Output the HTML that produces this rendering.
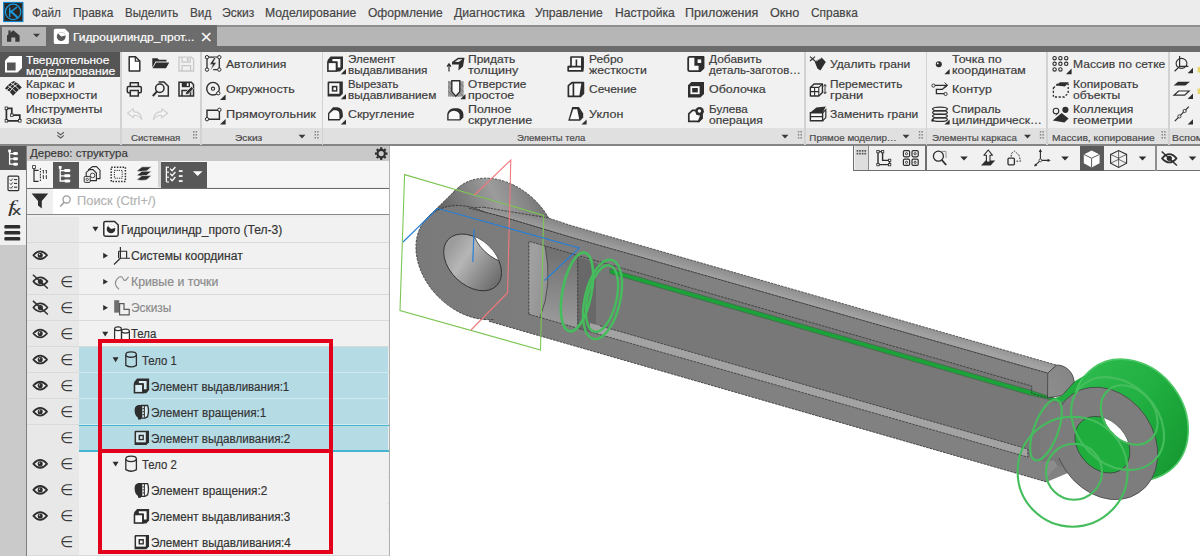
<!DOCTYPE html>
<html lang="ru"><head><meta charset="utf-8"><title>Гидроцилиндр_прото</title>
<style>
html,body{margin:0;padding:0}
body{width:1200px;height:556px;position:relative;overflow:hidden;background:#fff;font-family:"Liberation Sans",sans-serif}
.b{position:absolute}
.t{position:absolute;white-space:nowrap;line-height:1;transform-origin:0 0;display:block;-webkit-text-stroke:0.18px currentColor}
svg{position:absolute;left:0;top:0}
</style></head><body>
<div class="b" style="left:0px;top:0px;width:1200px;height:25px;background:#ececec;"></div>
<div class="b" style="left:0px;top:25px;width:1200px;height:27px;background:#b6b6b6;"></div>
<div class="b" style="left:217px;top:25px;width:983px;height:1.6px;background:#8f8f8f;"></div>
<div class="b" style="left:0px;top:46px;width:1200px;height:6px;background:#6c6c6c;"></div>
<div class="b" style="left:0px;top:25px;width:217px;height:27px;background:#6c6c6c;"></div>
<div class="b" style="left:2px;top:27px;width:44px;height:19px;background:#b4b4b4;"></div>
<div class="b" style="left:0px;top:52px;width:1200px;height:76px;background:#f1f1f1;"></div>
<div class="b" style="left:0px;top:127.8px;width:1200px;height:16.7px;background:#e0e0e0;"></div>
<div class="b" style="left:0px;top:144.4px;width:1200px;height:1.3px;background:#858585;"></div>
<div class="b" style="left:0px;top:52px;width:120px;height:24.5px;background:#555555;"></div>
<div class="b" style="left:120px;top:52px;width:1.5px;height:92.5px;background:#d2d2d2;"></div>
<div class="b" style="left:200px;top:52px;width:1.5px;height:92.5px;background:#d2d2d2;"></div>
<div class="b" style="left:321.5px;top:52px;width:1.5px;height:92.5px;background:#d2d2d2;"></div>
<div class="b" style="left:804px;top:52px;width:1.5px;height:92.5px;background:#d2d2d2;"></div>
<div class="b" style="left:925.5px;top:52px;width:1.5px;height:92.5px;background:#d2d2d2;"></div>
<div class="b" style="left:1046px;top:52px;width:1.5px;height:92.5px;background:#d2d2d2;"></div>
<div class="b" style="left:1168px;top:52px;width:1.5px;height:92.5px;background:#d2d2d2;"></div>
<div class="b" style="left:0px;top:145.5px;width:27px;height:411px;background:#cacaca;"></div>
<div class="b" style="left:0px;top:145.5px;width:25.5px;height:24.5px;background:#555555;"></div>
<div class="b" style="left:0px;top:170px;width:25.5px;height:75px;background:#f0f0f0;"></div>
<div class="b" style="left:27px;top:145.5px;width:363px;height:411px;background:#eeeeee;"></div>
<div class="b" style="left:25.5px;top:145.5px;width:1.6px;height:411px;background:#808080;"></div>
<div class="b" style="left:388.5px;top:145.5px;width:1.5px;height:411px;background:#b0b0b0;"></div>
<div class="b" style="left:27px;top:145.5px;width:361.5px;height:15.8px;background:#c9c9c9;"></div>
<div class="b" style="left:27px;top:161.3px;width:361.5px;height:26.2px;background:#f5f5f5;"></div>
<div class="b" style="left:158.2px;top:161.3px;width:3px;height:26.2px;background:#d4d4d4;"></div>
<div class="b" style="left:53.2px;top:162.3px;width:25.4px;height:25.4px;background:#585858;"></div>
<div class="b" style="left:161.2px;top:162.3px;width:46px;height:25.4px;background:#585858;"></div>
<div class="b" style="left:27px;top:187.5px;width:361.5px;height:1.5px;background:#6a6a6a;"></div>
<div class="b" style="left:27px;top:189px;width:361.5px;height:25px;background:#ffffff;"></div>
<div class="b" style="left:27px;top:189px;width:26px;height:24.7px;background:#efefef;"></div>
<div class="b" style="left:27px;top:213.7px;width:361.5px;height:1.5px;background:#8a8a8a;"></div>
<div class="b" style="left:27px;top:216.6px;width:52.2px;height:26.1px;background:#e8e8e8;"></div>
<div class="b" style="left:79.2px;top:216.6px;width:309.3px;height:26.1px;background:#f1f1f1;"></div>
<div class="b" style="left:27px;top:242.0px;width:361.5px;height:1px;background:#dadada;"></div>
<div class="b" style="left:27px;top:242.67px;width:52.2px;height:26.1px;background:#e8e8e8;"></div>
<div class="b" style="left:79.2px;top:242.67px;width:309.3px;height:26.1px;background:#f1f1f1;"></div>
<div class="b" style="left:27px;top:268.07px;width:361.5px;height:1px;background:#dadada;"></div>
<div class="b" style="left:27px;top:268.74px;width:52.2px;height:26.1px;background:#e8e8e8;"></div>
<div class="b" style="left:79.2px;top:268.74px;width:309.3px;height:26.1px;background:#f1f1f1;"></div>
<div class="b" style="left:27px;top:294.14px;width:361.5px;height:1px;background:#dadada;"></div>
<div class="b" style="left:27px;top:294.81px;width:52.2px;height:26.1px;background:#e8e8e8;"></div>
<div class="b" style="left:79.2px;top:294.81px;width:309.3px;height:26.1px;background:#f1f1f1;"></div>
<div class="b" style="left:27px;top:320.21px;width:361.5px;height:1px;background:#dadada;"></div>
<div class="b" style="left:27px;top:320.88px;width:52.2px;height:26.1px;background:#e8e8e8;"></div>
<div class="b" style="left:79.2px;top:320.88px;width:309.3px;height:26.1px;background:#f1f1f1;"></div>
<div class="b" style="left:27px;top:346.28px;width:361.5px;height:1px;background:#dadada;"></div>
<div class="b" style="left:27px;top:346.95px;width:52.2px;height:26.1px;background:#e8e8e8;"></div>
<div class="b" style="left:79.2px;top:346.95px;width:309.3px;height:26.1px;background:#b5dbe5;"></div>
<div class="b" style="left:27px;top:372.34999999999997px;width:361.5px;height:1px;background:#dadada;"></div>
<div class="b" style="left:79.2px;top:372.34999999999997px;width:309.3px;height:1px;background:#d2e9ef;"></div>
<div class="b" style="left:27px;top:373.02px;width:52.2px;height:26.1px;background:#e8e8e8;"></div>
<div class="b" style="left:79.2px;top:373.02px;width:309.3px;height:26.1px;background:#b5dbe5;"></div>
<div class="b" style="left:27px;top:398.41999999999996px;width:361.5px;height:1px;background:#dadada;"></div>
<div class="b" style="left:79.2px;top:398.41999999999996px;width:309.3px;height:1px;background:#d2e9ef;"></div>
<div class="b" style="left:27px;top:399.09000000000003px;width:52.2px;height:26.1px;background:#e8e8e8;"></div>
<div class="b" style="left:79.2px;top:399.09000000000003px;width:309.3px;height:26.1px;background:#b5dbe5;"></div>
<div class="b" style="left:27px;top:424.49px;width:361.5px;height:1px;background:#dadada;"></div>
<div class="b" style="left:79.2px;top:424.49px;width:309.3px;height:1px;background:#d2e9ef;"></div>
<div class="b" style="left:27px;top:425.15999999999997px;width:52.2px;height:26.1px;background:#e8e8e8;"></div>
<div class="b" style="left:79.2px;top:425.15999999999997px;width:309.3px;height:26.1px;background:#b5dbe5;"></div>
<div class="b" style="left:27px;top:450.55999999999995px;width:361.5px;height:1px;background:#dadada;"></div>
<div class="b" style="left:79.2px;top:450.55999999999995px;width:309.3px;height:1px;background:#d2e9ef;"></div>
<div class="b" style="left:27px;top:451.23px;width:52.2px;height:26.1px;background:#e8e8e8;"></div>
<div class="b" style="left:79.2px;top:451.23px;width:309.3px;height:26.1px;background:#f1f1f1;"></div>
<div class="b" style="left:27px;top:476.63px;width:361.5px;height:1px;background:#dadada;"></div>
<div class="b" style="left:27px;top:477.29999999999995px;width:52.2px;height:26.1px;background:#e8e8e8;"></div>
<div class="b" style="left:79.2px;top:477.29999999999995px;width:309.3px;height:26.1px;background:#f1f1f1;"></div>
<div class="b" style="left:27px;top:502.69999999999993px;width:361.5px;height:1px;background:#dadada;"></div>
<div class="b" style="left:27px;top:503.37px;width:52.2px;height:26.1px;background:#e8e8e8;"></div>
<div class="b" style="left:79.2px;top:503.37px;width:309.3px;height:26.1px;background:#f1f1f1;"></div>
<div class="b" style="left:27px;top:528.77px;width:361.5px;height:1px;background:#dadada;"></div>
<div class="b" style="left:27px;top:529.44px;width:52.2px;height:26.1px;background:#e8e8e8;"></div>
<div class="b" style="left:79.2px;top:529.44px;width:309.3px;height:26.1px;background:#f1f1f1;"></div>
<div class="b" style="left:27px;top:554.84px;width:361.5px;height:1px;background:#dadada;"></div>
<div class="b" style="left:27px;top:555.51px;width:52.2px;height:26.1px;background:#e8e8e8;"></div>
<div class="b" style="left:79.2px;top:555.51px;width:309.3px;height:26.1px;background:#f1f1f1;"></div>
<div class="b" style="left:27px;top:580.91px;width:361.5px;height:1px;background:#dadada;"></div>
<div class="b" style="left:79px;top:424.6px;width:309.5px;height:1.3px;background:#45b5d0;"></div>
<div class="b" style="left:79px;top:450.2px;width:309.5px;height:1.4px;background:#45b5d0;"></div>
<svg width="1200" height="556" viewBox="0 0 1200 556">
<defs>
<linearGradient id="gl" gradientUnits="userSpaceOnUse" x1="425" y1="250" x2="545" y2="195"><stop offset="0.15" stop-color="#5a5a5a"/><stop offset="0.45" stop-color="#808080"/><stop offset="0.65" stop-color="#9c9c9c"/><stop offset="0.85" stop-color="#858585"/><stop offset="1" stop-color="#6e6e6e"/></linearGradient>
<linearGradient id="gt" gradientUnits="userSpaceOnUse" x1="700" y1="262" x2="697" y2="273"><stop offset="0" stop-color="#8a8a8a"/><stop offset="1" stop-color="#a2a2a2"/></linearGradient>
<linearGradient id="gh" gradientUnits="userSpaceOnUse" x1="448" y1="250" x2="498" y2="285"><stop offset="0" stop-color="#9c9c9c"/><stop offset="0.3" stop-color="#b6b6b6"/><stop offset="0.65" stop-color="#8e8e8e"/><stop offset="1" stop-color="#6a6a6a"/></linearGradient>
<linearGradient id="gc" gradientUnits="userSpaceOnUse" x1="529" y1="280" x2="560" y2="285"><stop offset="0" stop-color="#a0a0a0"/><stop offset="1" stop-color="#8a8a8a"/></linearGradient>
<linearGradient id="gb" gradientUnits="userSpaceOnUse" x1="560" y1="255" x2="550" y2="322"><stop offset="0" stop-color="#727272"/><stop offset="1" stop-color="#9a9a9a"/></linearGradient>
<linearGradient id="gg" gradientUnits="userSpaceOnUse" x1="1085" y1="370" x2="1188" y2="440"><stop offset="0" stop-color="#2cba4c"/><stop offset="0.5" stop-color="#21b041"/><stop offset="1" stop-color="#179c33"/></linearGradient>
<linearGradient id="ge" gradientUnits="userSpaceOnUse" x1="1048" y1="385" x2="1072" y2="372"><stop offset="0" stop-color="#8c8c8c"/><stop offset="1" stop-color="#858585"/></linearGradient>
<linearGradient id="gf" gradientUnits="userSpaceOnUse" x1="420" y1="0" x2="720" y2="0"><stop offset="0" stop-color="#7a7a7a"/><stop offset="1" stop-color="#818181"/></linearGradient>
<clipPath id="chole"><path d="M496.90 285.46A33.5 22.8 43.5 1 0 448.30 239.34A33.5 22.8 43.5 1 0 496.90 285.46z" />
</clipPath>
<clipPath id="chole2"><path d="M1123.34 467.96A31.3 23.5 48 1 0 1081.46 421.44A31.3 23.5 48 1 0 1123.34 467.96z" />
</clipPath>
</defs>
<path d="M546.25 280.45A64 48 45 1 0 455.75 189.95A64 48 45 1 0 546.25 280.45z" fill="url(#gl)" stroke="#2a2a2a" stroke-width="0.8" stroke-dasharray="2.5 1.2"/>
<polygon points="428.0,217.1 456.0,189.7 546.0,280.7 518.0,308.1" fill="url(#gl)"/>
<path d="M428.0 217.1L456.0 189.7" stroke="#2a2a2a" stroke-width="0.8" stroke-dasharray="2.5 1" fill="none"/>
<polygon points="483.7,207.2 548.4,218.0 570.0,225.2 1056.6,365.1 1047.7,373.2 570.0,237.0 503.5,217.1 469.0,208.0" fill="url(#gt)" stroke="#2a2a2a" stroke-width="0.7" stroke-dasharray="2.5 1"/>
<path d="M503.5 217.1L570 237.0L1047.7 373.2L1047.7 397.9L1075 402L1075 470L1046.5 481.9L489 321.3z" fill="url(#gf)"/>
<path d="M518.25 307.85A64 48 45 1 0 427.75 217.35A64 48 45 1 0 518.25 307.85z" fill="url(#gf)" stroke="#2a2a2a" stroke-width="0.8" stroke-dasharray="2.5 1.2"/>
<path d="M469 208.2L503.5 217.1L570 237.0L570 341L489 318z" fill="url(#gf)"/>
<path d="M489 321.3L1046.5 481.9" stroke="#2a2a2a" stroke-width="0.8" stroke-dasharray="2.5 1" fill="none"/>
<path d="M469 208L503.5 217.1L570 237.0L1047.7 373.2" stroke="#2a2a2a" stroke-width="0.8" stroke-dasharray="2.5 1" fill="none"/>
<path d="M496.90 285.46A33.5 22.8 43.5 1 0 448.30 239.34A33.5 22.8 43.5 1 0 496.90 285.46z" fill="url(#gh)" stroke="#2a2a2a" stroke-width="0.9"/>
<g clip-path="url(#chole)"><path d="M524.90 258.06A33.5 22.8 43.5 1 0 476.30 211.94A33.5 22.8 43.5 1 0 524.90 258.06z" fill="#ffffff" stroke="#2a2a2a" stroke-width="0.8"/>
</g>
<polygon points="528.8,241.3 1031.7,386.0 1031.7,393.4 1047.7,397.9 1075.0,402.0 1075.0,470.6 528.8,314.2" fill="#787878"/>
<path d="M528.8 241.3L545 246.0Q553 285 540 317.4L528.8 314.2z" fill="url(#gc)"/>
<path d="M545 246.0L577.7 255.4L577.7 328.2L540 317.4Q553 285 545 246.0z" fill="url(#gb)"/>
<path d="M545 246.0Q553 285 540 317.4" fill="none" stroke="#2a2a2a" stroke-width="0.6"/>
<polygon points="577.7,256.4 600.0,264.8 600.0,332.6 577.7,328.2" fill="#686868"/>
<polygon points="596.0,270.0 1075.0,408.7 1075.0,462.6 596.0,324.6" fill="#787878"/>
<polygon points="610.0,268.8 1030.0,390.2 1056.0,398.7 1056.0,400.8 1030.0,395.1 610.0,273.4" fill="#1aa338" stroke="#4a6b4e" stroke-width="0.9"/>
<polygon points="590.0,322.9 1027.8,449.0 1027.8,457.1 590.0,331.7" fill="#a3a3a3"/>
<g stroke="#2a2a2a" stroke-width="0.7" stroke-dasharray="2.5 1" fill="none"><path d="M528.8 314.2L528.8 241.3L1031.7 386.0L1031.7 393.4L1047.7 397.9"/><path d="M528.8 314.2L1027.8 457.1L1027.8 449.0"/><path d="M600 325.8L1027.8 449.0"/><path d="M577.7 255.4L577.7 328.2"/></g>
<polygon points="1049,400.3 1062,395.5 1074.4,381.5 1084.4,375.4 1082,392 1062,402" fill="#22ad40"/>
<path d="M1047.7 373.2L1056.6 365.1C1064 364.5 1073.5 371 1074.2 382L1061.8 395.6L1053 397L1047.5 397.9z" fill="url(#ge)" stroke="#2a2a2a" stroke-width="0.7"/>
<polygon points="1045.2,461.7 1053.8,460.3 1057.2,465.7 1050.3,473.2 1045.5,480.5" fill="#8c8c8c"/>
<path d="M1168.96 471.08A64 53.5 53.4 1 0 1092.64 368.32A64 53.5 53.4 1 0 1168.96 471.08z" fill="url(#gg)" stroke="#4fc868" stroke-width="1.6"/>
<polygon points="1076.5,391.2 1084.4,375.4 1150,400 1184.5,446 1156.9,474.3" fill="url(#gg)"/>
<polygon points="1040.0,398.6 1085.0,411.6 1085.0,470.0 1058.7,459.0 1046.5,456.5 1040.0,452.5" fill="#7b7b7b"/>
<path d="M1138.92 492.64A59.4 47.9 56 1 0 1072.48 394.16A59.4 47.9 56 1 0 1138.92 492.64z" fill="#7d7d7d" stroke="#3a3a3a" stroke-width="0.7"/>
<polygon points="1049.0,402.2 1075.0,408.7 1075.0,462.0 1058.7,458.0 1049.0,455.5" fill="#7c7c7c"/>
<path d="M1123.34 467.96A31.3 23.5 48 1 0 1081.46 421.44A31.3 23.5 48 1 0 1123.34 467.96z" fill="#1fae3e" stroke="#2a2a2a" stroke-width="0.6"/>
<g clip-path="url(#chole2)"><path d="M1150.84 440.96A31.3 23.5 48 1 0 1108.96 394.44A31.3 23.5 48 1 0 1150.84 440.96z" fill="#ffffff" stroke="#2a2a2a" stroke-width="0.6"/>
</g>
<g fill="none" stroke="#45bd5c" stroke-width="2.1"><path d="M584.63 252.73A40 14.5 -79 1 0 569.37 331.27A40 14.5 -79 1 0 584.63 252.73z" stroke-width="2.6"/>
<path d="M611.61 259.94A40.5 17.5 -77 1 0 593.39 338.86A40.5 17.5 -77 1 0 611.61 259.94z" stroke-width="2.4"/>
<path d="M609.65 265.37A34 14.5 -77 1 0 594.35 331.63A34 14.5 -77 1 0 609.65 265.37z" stroke-width="2.4"/>
<circle cx="1072.600" cy="471.700" r="55"/><circle cx="1074" cy="471.700" r="28"/><path d="M1056.94 399.93A32 12 -70 1 0 1035.06 460.07A32 12 -70 1 0 1056.94 399.93z" />
<path d="M1150.09 439.90A32.5 25 50 1 0 1108.31 390.10A32.5 25 50 1 0 1150.09 439.90z" />
<path d="M1154.37 460.37A52 40 45 1 0 1080.83 386.83A52 40 45 1 0 1154.37 460.37z" />
</g>
<g fill="none" stroke-width="1.1"><path d="M404.600 174.600L543.700 215.400L540.500 350L400 310.500z" stroke="#7cc653"/><path d="M474.500 195L510.800 160L507.600 292.700L471 330" stroke="#f0787c"/><path d="M403 242L437.500 208.300L579.300 248L544.500 280.500" stroke="#247fd8" stroke-width="1.15"/><path d="M474 229.300L472.800 262" stroke="#247fd8" stroke-width="1.15"/></g>
</svg>
<div class="b" style="left:853.4px;top:145.5px;width:347px;height:25.6px;background:#f1f1f1;border:1.3px solid #6e6e6e;border-top:none;border-right:none;box-sizing:border-box"></div>
<div class="b" style="left:854.7px;top:145.5px;width:13.8px;height:24.3px;background:#dedede;"></div>
<div class="b" style="left:868.3px;top:145.5px;width:1px;height:24.3px;background:#8a8a8a;"></div>
<div class="b" style="left:925px;top:145.5px;width:1.5px;height:25px;background:#6f6f6f;"></div>
<div class="b" style="left:1155px;top:145.5px;width:1.5px;height:25px;background:#8f8f8f;"></div>
<div class="b" style="left:1079.5px;top:145.5px;width:24.5px;height:25.5px;background:#5a5a5a;"></div>
<svg width="1200" height="556" viewBox="0 0 1200 556">
<rect x="3.700" y="2.500" width="19.200" height="19" fill="#2d2622" stroke="#1283c8" stroke-width="1.200"/><circle cx="13.100" cy="11.900" r="7.700" fill="none" stroke="#1a9ade" stroke-width="1.300"/><path d="M9.700 7.400V17 M9.900 12.600L17 7.200" fill="none" stroke="#1a9ade" stroke-width="1.500"/><path d="M10.200 10.800L18.400 18.200" fill="none" stroke="#1a9ade" stroke-width="2.100"/>
<path d="M7 35.6L13.3 30.2L19.6 35.6V41.8H15.3V37.6H11.3V41.8H7z" fill="#3a3a3a"/><rect x="8.4" y="30.4" width="2.200" height="3.800" fill="#3a3a3a"/><path d="M33.0 33.8h7l-3.5 3.4z" fill="#3a3a3a"/>
<path d="M55.4 28.8H65L68.9 32.7V42.4Q68.9 44 67.3 44H55.4Q53.8 44 53.8 42.4V30.4Q53.8 28.8 55.4 28.8z" fill="#fff"/><circle cx="61.2" cy="36.6" r="4.4" fill="#5a5a5a"/><path d="M61.2 36.6L58.2 33.6A4.3 4.3 0 0 1 65.4 35.6z" fill="#fff"/>
<path d="M5 60.5L9.5 56H22V68L17.5 72.5H5z" fill="#fff"/><rect x="7" y="62.5" width="8.6" height="8" fill="#555"/>
<path d="M5 88.5Q9 83 14 81Q18.5 83.5 21.8 87.5Q17.5 90.5 13 95.8Q9.5 91 5 88.5z" fill="#2e2e2e"/><path d="M7.8 85.6Q12.5 88 16 92.3 M10.8 83Q15.5 85.5 19 89.6 M9.3 92Q13 87 17.5 84.2 M7 90Q11 85 15.6 82" stroke="#f1f1f1" stroke-width="0.9" fill="none"/>
<path d="M6.400 108.300H11.800V115.200H19.800V120.800H6.400z" fill="none" stroke="#2e2e2e" stroke-width="1.700"/><rect x="5.1000000000000005" y="107.0" width="2.600" height="2.600" fill="#f1f1f1" stroke="#2e2e2e" stroke-width="0.800"/><rect x="18.5" y="119.5" width="2.600" height="2.600" fill="#f1f1f1" stroke="#2e2e2e" stroke-width="0.800"/><rect x="5.1000000000000005" y="119.5" width="2.600" height="2.600" fill="#f1f1f1" stroke="#2e2e2e" stroke-width="0.800"/><rect x="10.5" y="113.9" width="2.600" height="2.600" fill="#f1f1f1" stroke="#2e2e2e" stroke-width="0.800"/>
<path d="M57.3 132.3l3.3 2.6l3.3-2.6M57.3 135.4l3.3 2.6l3.3-2.6" stroke="#555" stroke-width="1.1" fill="none"/>
<path d="M129.2 56.7H135.5L139.8 61V70.9H129.2z" fill="#fff" stroke="#2e2e2e" stroke-width="1.5" stroke-linejoin="round"/><path d="M135.3 56.7V61.2H139.8" fill="none" stroke="#2e2e2e" stroke-width="1.2"/>
<path d="M152.3 58.2H157.5L159 59.8H166.5V61.4H155.5L152.3 67.5z" fill="#2e2e2e"/><path d="M156 62.4H169.2L166 68.3H152.6z" fill="#2e2e2e"/>
<g fill="none" stroke="#c9c9c9" stroke-width="1.3"><path d="M179 57.2H191.5L193.6 59.3V71H179z"/><path d="M182 57.2V62.2H190.3V57.2M182 71V65.6H190.6V71"/></g><rect x="186.8" y="58" width="2" height="3.2" fill="#c9c9c9"/>
<g fill="none" stroke="#2e2e2e" stroke-width="1.5"><path d="M130.3 86.5V82.7H138.3V86.5"/><rect x="127.3" y="86.5" width="14" height="6.3" rx="1.2"/><path d="M130.3 90.5H138.3V95.9H130.3z" fill="#f1f1f1"/></g>
<path d="M158.6 82H164L168.3 86.3V95.9H158" fill="none" stroke="#2e2e2e" stroke-width="1.5"/><circle cx="159.8" cy="88.2" r="4.2" fill="#f1f1f1" stroke="#2e2e2e" stroke-width="1.5"/><path d="M157 91.4L152.8 96" stroke="#2e2e2e" stroke-width="2"/>
<g fill="none" stroke="#2e2e2e" stroke-width="1.5"><path d="M179 82.3H191.3L193.5 84.5V96H179z"/><path d="M182 96V90.4H190.5V96"/></g><rect x="181.8" y="82.6" width="8.2" height="4.6" fill="#2e2e2e"/><rect x="186.8" y="83.2" width="1.8" height="2.8" fill="#f1f1f1"/><path d="M185.3 94.8L186 92L191.4 86.6L193.6 88.8L188.2 94.2z" fill="#2e2e2e" stroke="#f1f1f1" stroke-width="0.7"/>
<path d="M127.6 113.2L133.5 108.8V111.6Q140.8 111.6 141.8 119.6Q139 115 133.5 115.2V117.8z" fill="#f4f4f4" stroke="#cfcfcf" stroke-width="1.1" stroke-linejoin="round"/><path d="M167.6 113.2L161.7 108.8V111.6Q154.4 111.6 153.4 119.6Q156.200 115 161.7 115.2V117.8z" fill="#f4f4f4" stroke="#cfcfcf" stroke-width="1.1" stroke-linejoin="round"/>
<rect x="193.0" y="131" width="1.5" height="1.6" fill="#8a8a8a"/><rect x="193.0" y="134" width="1.5" height="1.6" fill="#8a8a8a"/><rect x="193.0" y="137" width="1.5" height="1.6" fill="#8a8a8a"/><rect x="195.6" y="131" width="1.5" height="1.6" fill="#8a8a8a"/><rect x="195.6" y="134" width="1.5" height="1.6" fill="#8a8a8a"/><rect x="195.6" y="137" width="1.5" height="1.6" fill="#8a8a8a"/>
<path d="M207 57.2H219.3V69.6H213.2 M207 57.2V69.6" fill="none" stroke="#2e2e2e" stroke-width="1.3"/><path d="M214.3 57.6L209.6 64.4H212.6L210.4 70.4L216.6 62.4H213.4L216 57.6z" fill="#2e2e2e" stroke="#f1f1f1" stroke-width="0.5"/><circle cx="207" cy="57.2" r="1.7" fill="#f1f1f1" stroke="#2e2e2e" stroke-width="1"/><circle cx="219.3" cy="57.2" r="1.7" fill="#f1f1f1" stroke="#2e2e2e" stroke-width="1"/><circle cx="219.3" cy="69.6" r="1.7" fill="#f1f1f1" stroke="#2e2e2e" stroke-width="1"/><circle cx="207" cy="69.6" r="1.7" fill="#f1f1f1" stroke="#2e2e2e" stroke-width="1"/>
<circle cx="213" cy="88.7" r="6.3" fill="none" stroke="#2e2e2e" stroke-width="1.4"/><circle cx="213" cy="88.7" r="1.6" fill="none" stroke="#2e2e2e" stroke-width="1.1"/><circle cx="218.3" cy="93.2" r="1.7" fill="#f1f1f1" stroke="#2e2e2e" stroke-width="1"/><path d="M225.6 100h-5.6l5.6 -5.6z" fill="#2e2e2e"/>
<path d="M207 110.2H219.4V119.2H207z" fill="none" stroke="#2e2e2e" stroke-width="1.4"/><circle cx="207" cy="119.2" r="1.7" fill="#f1f1f1" stroke="#2e2e2e" stroke-width="1"/><circle cx="219.4" cy="109.8" r="1.7" fill="#f1f1f1" stroke="#2e2e2e" stroke-width="1"/><path d="M225.6 124.6h-5.6l5.6 -5.6z" fill="#2e2e2e"/>
<path d="M298.5 134.8h7l-3.5 3.6z" fill="#3a3a3a"/>
<rect x="314.5" y="131" width="1.5" height="1.6" fill="#8a8a8a"/><rect x="314.5" y="134" width="1.5" height="1.6" fill="#8a8a8a"/><rect x="314.5" y="137" width="1.5" height="1.6" fill="#8a8a8a"/><rect x="317.1" y="131" width="1.5" height="1.6" fill="#8a8a8a"/><rect x="317.1" y="134" width="1.5" height="1.6" fill="#8a8a8a"/><rect x="317.1" y="137" width="1.5" height="1.6" fill="#8a8a8a"/>
<g transform="translate(327 56)"><path d="M3.600 0.600H16V12.400L13 15.600H9V6.600H0.600V4z" fill="#2e2e2e"/><path d="M5.400 3H13.400V11.600H10.600V5.400H5.400z" fill="#fafafa"/><rect x="0.900" y="6.300" width="8.600" height="8.800" fill="#fafafa" stroke="#2e2e2e" stroke-width="1.600"/></g>
<path d="M346 74.2h-5.2l5.2 -5.2z" fill="#2e2e2e"/>
<g transform="translate(327 81)"><path d="M1.800 0.600H15.800V12.800L13 15.600H0.600V1.800Q0.600 0.600 1.800 0.600z" fill="#2e2e2e"/><rect x="2.200" y="2.200" width="10.200" height="10.600" fill="#fafafa"/><rect x="4.800" y="4.800" width="5.600" height="5.800" fill="#2e2e2e"/><rect x="6.400" y="6.400" width="2.600" height="2.800" fill="#fafafa"/></g>
<path d="M346 99.3h-5.2l5.2 -5.2z" fill="#2e2e2e"/>
<path d="M328 113.2L333 107.2H337.5Q342.8 108 342.8 114V117L339.6 120.4H328z" fill="#2e2e2e"/><path d="M329.3 113.8L333.4 110.2H336Q339.4 110.6 339.4 114.4V119H329.3z" fill="#fafafa"/><path d="M346 124.6h-5.2l5.2 -5.2z" fill="#2e2e2e"/>
<path d="M452 62L458 57.8H464.5L463 66.6L458.4 70.6L458.8 64.4H452z" fill="#2e2e2e"/><path d="M453.4 65.2H458L457.700 69.600" fill="none" stroke="#2e2e2e" stroke-width="0"/><path d="M454.8 61.8L458.6 59.2H462.4L458.6 62z" fill="#f1f1f1"/><path d="M449 71.6V64.4 M447 66.6L449 63.8L451 66.6" fill="none" stroke="#2e2e2e" stroke-width="1.2"/>
<rect x="448" y="81.200" width="15.6" height="15.400" fill="#9a9a9a"/><path d="M448 81.200l15.600 15.400M448 86l10.600 10.600M448 91l5.600 5.600M453 81.200l10.600 10.600M458 81.200l5.600 5.600" stroke="#6a6a6a" stroke-width="0.7"/><path d="M451.8 80.8V91.6L455.800 96.2L459.800 91.6V80.8z" fill="#f8f8f8" stroke="#2e2e2e" stroke-width="1.4"/><path d="M465.5 99.3h-5.2l5.2 -5.2z" fill="#2e2e2e"/>
<path d="M447.2 120.6V114.600Q447.6 109.400 453.400 108.200H458Q463.200 109.400 463.400 114.600V117.400L460.200 120.600z" fill="#2e2e2e"/><path d="M448.600 119.200V114.800Q449.200 111.400 453.800 110.800Q459 111.200 459.600 114.800V119.200z" fill="#fafafa"/>
<path d="M571 57H582.800V70.800H568.200V66.600H571z" fill="#fafafa" stroke="#2e2e2e" stroke-width="1.700" stroke-linejoin="round"/><path d="M581 57.600h2.800v10.600l-2.800 2.600z" fill="#2e2e2e"/><path d="M569 66.600H581M576.400 59.400V66.400" fill="none" stroke="#2e2e2e" stroke-width="1.600"/>
<path d="M568.400 85.600L572 82.600H583.400V93.400L580.400 96.400H568.400z" fill="#fafafa" stroke="#2e2e2e" stroke-width="1.700" stroke-linejoin="round"/><path d="M573.400 82.800V96.200" stroke="#2e2e2e" stroke-width="1.700"/><path d="M581.400 83h2.600v10.600l-3.200 3.200h-1.600z" fill="#2e2e2e"/>
<path d="M572.200 107H579L583.200 113.600V117.400L580.200 120.800H568.200z" fill="#2e2e2e"/><path d="M573.200 109.200H577.200L579.200 119.200H570z" fill="#fafafa"/><path d="M586.6 124.6h-5.2l5.2 -5.2z" fill="#2e2e2e"/>
<path d="M689.600 56.800H703.400V68L700 71.200H689.600Q688.200 71.200 688.200 69.800V58.200Q688.200 56.800 689.600 56.800z" fill="#fafafa" stroke="#2e2e2e" stroke-width="1.800" stroke-linejoin="round"/><path d="M694.400 56.800H704.200V68.200L700.400 72H698.600V65.800H694.400z" fill="#2e2e2e"/><rect x="697.600" y="59.400" width="3.600" height="3.600" fill="#fafafa"/>
<path d="M688 85.200L691.400 82H704V94L700.400 97.400H688z" fill="#2e2e2e"/><rect x="690.400" y="86.200" width="9.200" height="8" fill="#fafafa"/><rect x="692.200" y="88" width="5.600" height="4.400" fill="#2e2e2e"/>
<path d="M688.800 113.800L692.400 110.400H697V114H701.800V118.200L698.400 121.400H688.800z" fill="#fafafa" stroke="#2e2e2e" stroke-width="1.700" stroke-linejoin="round"/><path d="M700.400 114.600h2.400v4l-3.600 3.600h-1.800z" fill="#2e2e2e"/><circle cx="699.600" cy="111.200" r="4.300" fill="#2e2e2e"/><circle cx="699.400" cy="111" r="1.700" fill="#fafafa"/>
<path d="M781.5 134.8h7l-3.5 3.6z" fill="#3a3a3a"/>
<rect x="797.8" y="131" width="1.5" height="1.6" fill="#8a8a8a"/><rect x="797.8" y="134" width="1.5" height="1.6" fill="#8a8a8a"/><rect x="797.8" y="137" width="1.5" height="1.6" fill="#8a8a8a"/><rect x="800.4" y="131" width="1.5" height="1.6" fill="#8a8a8a"/><rect x="800.4" y="134" width="1.5" height="1.6" fill="#8a8a8a"/><rect x="800.4" y="137" width="1.5" height="1.6" fill="#8a8a8a"/>
<path d="M810 56.600L815 61M815 56.600L810 61" stroke="#2e2e2e" stroke-width="1.1"/><path d="M814.600 61.600L821.600 57.400L825.800 62L820.400 70.600L817.400 68.600z" fill="#2e2e2e"/><path d="M816.200 61L821.400 58" stroke="#f1f1f1" stroke-width="0.7"/>
<path d="M810.400 87.400L814 84H822.400V92.600L818.800 96H810.400z" fill="#fafafa" stroke="#2e2e2e" stroke-width="1.400" stroke-linejoin="round"/><path d="M810.400 87.400H818.800V96M818.800 87.400L822.400 84M814.600 87.600V96M810.400 91.600H818.800" fill="none" stroke="#2e2e2e" stroke-width="1.100"/><path d="M825 84.600V93.400M823.600 86.400L825 84.400L826.400 86.400M823.600 91.800L825 93.800L826.400 91.800" fill="none" stroke="#2e2e2e" stroke-width="0.900"/>
<path d="M810.400 112.800H822.600V120.800H810.400z" fill="#fafafa" stroke="#2e2e2e" stroke-width="1.400"/><path d="M810.400 116.600H822.600M822.600 112.800L825.800 109.600V117.600L822.600 120.800" fill="none" stroke="#2e2e2e" stroke-width="1.200"/><path d="M810 112.800L816.400 107.400L825.800 106.600L822.600 112.800z" fill="#2e2e2e"/><path d="M902.5 134.8h7l-3.5 3.6z" fill="#3a3a3a"/>
<rect x="918.8" y="131" width="1.5" height="1.6" fill="#8a8a8a"/><rect x="918.8" y="134" width="1.5" height="1.6" fill="#8a8a8a"/><rect x="918.8" y="137" width="1.5" height="1.6" fill="#8a8a8a"/><rect x="921.4" y="131" width="1.5" height="1.6" fill="#8a8a8a"/><rect x="921.4" y="134" width="1.5" height="1.6" fill="#8a8a8a"/><rect x="921.4" y="137" width="1.5" height="1.6" fill="#8a8a8a"/>
<circle cx="938.800" cy="64.200" r="3" fill="#2e2e2e"/><circle cx="937.800" cy="63.400" r="0.900" fill="#f1f1f1"/><path d="M949.6 74.2h-5.2l5.2 -5.2z" fill="#2e2e2e"/>
<path d="M933.600 85.400H946.400L942.400 89.400H936.400V93.600H944.600" fill="none" stroke="#2e2e2e" stroke-width="1.300"/><circle cx="933.400" cy="85.600" r="1.600" fill="#f1f1f1" stroke="#2e2e2e" stroke-width="0.900"/><circle cx="945.600" cy="94" r="1.600" fill="#f1f1f1" stroke="#2e2e2e" stroke-width="0.900"/><path d="M944.600 82.600L947.600 85.400L944.600 88" fill="none" stroke="#2e2e2e" stroke-width="1"/>
<ellipse cx="940" cy="109.0" rx="7.400" ry="1.900" fill="none" stroke="#2e2e2e" stroke-width="1.300"/><ellipse cx="940" cy="112.5" rx="7.400" ry="1.900" fill="none" stroke="#2e2e2e" stroke-width="1.300"/><ellipse cx="940" cy="116.0" rx="7.400" ry="1.900" fill="none" stroke="#2e2e2e" stroke-width="1.300"/><ellipse cx="940" cy="119.5" rx="7.400" ry="1.900" fill="none" stroke="#2e2e2e" stroke-width="1.300"/><circle cx="932.600" cy="120.400" r="1.300" fill="#2e2e2e"/><path d="M949.6 124.6h-5.2l5.2 -5.2z" fill="#2e2e2e"/>
<path d="M1024.0 134.8h7l-3.5 3.6z" fill="#3a3a3a"/>
<rect x="1039.8" y="131" width="1.5" height="1.6" fill="#8a8a8a"/><rect x="1039.8" y="134" width="1.5" height="1.6" fill="#8a8a8a"/><rect x="1039.8" y="137" width="1.5" height="1.6" fill="#8a8a8a"/><rect x="1042.3999999999999" y="131" width="1.5" height="1.6" fill="#8a8a8a"/><rect x="1042.3999999999999" y="134" width="1.5" height="1.6" fill="#8a8a8a"/><rect x="1042.3999999999999" y="137" width="1.5" height="1.6" fill="#8a8a8a"/>
<circle cx="1054.6" cy="58.2" r="1.700" fill="#f1f1f1" stroke="#2e2e2e" stroke-width="1.100"/><circle cx="1054.6" cy="63.800000000000004" r="1.700" fill="#f1f1f1" stroke="#2e2e2e" stroke-width="1.100"/><circle cx="1054.6" cy="69.4" r="1.700" fill="#f1f1f1" stroke="#2e2e2e" stroke-width="1.100"/><circle cx="1060.3999999999999" cy="58.2" r="1.700" fill="#f1f1f1" stroke="#2e2e2e" stroke-width="1.100"/><circle cx="1060.3999999999999" cy="63.800000000000004" r="1.700" fill="#f1f1f1" stroke="#2e2e2e" stroke-width="1.100"/><circle cx="1060.3999999999999" cy="69.4" r="1.700" fill="#f1f1f1" stroke="#2e2e2e" stroke-width="1.100"/><circle cx="1066.1999999999998" cy="58.2" r="1.700" fill="#f1f1f1" stroke="#2e2e2e" stroke-width="1.100"/><circle cx="1066.1999999999998" cy="63.800000000000004" r="1.700" fill="#f1f1f1" stroke="#2e2e2e" stroke-width="1.100"/><path d="M1071.6 74.2h-5.6l5.6 -5.6z" fill="#2e2e2e"/>
<path d="M1053.400 88L1057.400 84.200H1068.200V93L1064.400 97H1053.400z" fill="none" stroke="#2e2e2e" stroke-width="1.300" stroke-dasharray="2.200 1.600"/><path d="M1056 85.400L1060 82.200H1068.800L1065 86.600z" fill="#2e2e2e"/>
<circle cx="1056" cy="111" r="2.800" fill="none" stroke="#2e2e2e" stroke-width="1.100"/><circle cx="1065.400" cy="109.800" r="3.100" fill="#2e2e2e"/><path d="M1052.800 120.600L1061.600 113L1068.600 118.600L1064.400 122.400z" fill="#2e2e2e"/><path d="M1055.800 115.400L1057.400 113.600" stroke="#2e2e2e" stroke-width="0.900"/>
<rect x="1161.5" y="131" width="1.5" height="1.6" fill="#8a8a8a"/><rect x="1161.5" y="134" width="1.5" height="1.6" fill="#8a8a8a"/><rect x="1161.5" y="137" width="1.5" height="1.6" fill="#8a8a8a"/><rect x="1164.1" y="131" width="1.5" height="1.6" fill="#8a8a8a"/><rect x="1164.1" y="134" width="1.5" height="1.6" fill="#8a8a8a"/><rect x="1164.1" y="137" width="1.5" height="1.6" fill="#8a8a8a"/>
<ellipse cx="1181.500" cy="63.400" rx="5.400" ry="5" fill="none" stroke="#2e2e2e" stroke-width="1.100"/><path d="M1179.600 56V66.400H1188.400M1179.600 66.400L1174.600 71.200" fill="none" stroke="#2e2e2e" stroke-width="1.200"/><path d="M1193 73.2h-5.4l5.4 -5.4z" fill="#2e2e2e"/>
<path d="M1178 81.800H1190L1185.400 85.400H1173.600z" fill="#2e2e2e"/><path d="M1178.600 91H1189.200L1184.600 95.200H1174z" fill="#fafafa" stroke="#2e2e2e" stroke-width="1.200"/><path d="M1193 99h-5.4l5.4 -5.4z" fill="#2e2e2e"/>
<path d="M1174.800 121.200L1188.800 106.600" stroke="#2e2e2e" stroke-width="1.200"/><circle cx="1179.400" cy="116.400" r="1.600" fill="#f1f1f1" stroke="#2e2e2e" stroke-width="0.900"/><circle cx="1184.600" cy="111" r="1.600" fill="#f1f1f1" stroke="#2e2e2e" stroke-width="0.900"/><path d="M1193 124.6h-5.4l5.4 -5.4z" fill="#2e2e2e"/>
<rect x="1197.600" y="67" width="3" height="5.500" fill="#e8d86a"/><rect x="1197.600" y="88.500" width="3" height="5.500" fill="#e8d86a"/>
<rect x="856.6" y="150.0" width="1.700" height="1.700" fill="#555"/><rect x="856.6" y="152.8" width="1.700" height="1.700" fill="#555"/><rect x="859.2" y="150.0" width="1.700" height="1.700" fill="#555"/><rect x="859.2" y="152.8" width="1.700" height="1.700" fill="#555"/><rect x="861.8000000000001" y="150.0" width="1.700" height="1.700" fill="#555"/><rect x="861.8000000000001" y="152.8" width="1.700" height="1.700" fill="#555"/><rect x="864.4" y="150.0" width="1.700" height="1.700" fill="#555"/><rect x="864.4" y="152.8" width="1.700" height="1.700" fill="#555"/><path d="M878 151.600H882.600V160.400H889.600V164.600H878z" fill="none" stroke="#2e2e2e" stroke-width="1.400"/><rect x="876.8" y="150.4" width="2.400" height="2.400" fill="#f1f1f1" stroke="#2e2e2e" stroke-width="0.800"/><rect x="881.4" y="150.4" width="2.400" height="2.400" fill="#f1f1f1" stroke="#2e2e2e" stroke-width="0.800"/><rect x="888.4" y="159.20000000000002" width="2.400" height="2.400" fill="#f1f1f1" stroke="#2e2e2e" stroke-width="0.800"/><rect x="888.4" y="163.4" width="2.400" height="2.400" fill="#f1f1f1" stroke="#2e2e2e" stroke-width="0.800"/><rect x="876.8" y="163.4" width="2.400" height="2.400" fill="#f1f1f1" stroke="#2e2e2e" stroke-width="0.800"/><rect x="903.4" y="150.6" width="6.200" height="6.200" rx="1.200" fill="none" stroke="#2e2e2e" stroke-width="1.200"/><circle cx="906.5" cy="153.7" r="1.100" fill="none" stroke="#2e2e2e" stroke-width="0.900"/><rect x="912" y="150.6" width="6.200" height="6.200" rx="1.200" fill="none" stroke="#2e2e2e" stroke-width="1.200"/><circle cx="915.1" cy="153.7" r="1.100" fill="none" stroke="#2e2e2e" stroke-width="0.900"/><rect x="903.4" y="159.2" width="6.200" height="6.200" rx="1.200" fill="none" stroke="#2e2e2e" stroke-width="1.200"/><circle cx="906.5" cy="162.29999999999998" r="1.100" fill="none" stroke="#2e2e2e" stroke-width="0.900"/><rect x="912" y="159.2" width="6.200" height="6.200" rx="1.200" fill="none" stroke="#2e2e2e" stroke-width="1.200"/><circle cx="915.1" cy="162.29999999999998" r="1.100" fill="none" stroke="#2e2e2e" stroke-width="0.900"/><circle cx="938.400" cy="156.200" r="5" fill="none" stroke="#2e2e2e" stroke-width="1.300"/><path d="M941.800 160L946.200 165" stroke="#2e2e2e" stroke-width="1.800"/><path d="M941 151.400H946V158" fill="none" stroke="#8a8a8a" stroke-width="0.900"/><path d="M960.2 156.6h7.6l-3.8 3.8z" fill="#2e2e2e"/>
<path d="M981 165.400L985.600 160.600H995.200L990.600 165.400z" fill="#2e2e2e"/><path d="M988.200 150L992.400 155.200H990V162H986.400V155.200H984z" fill="#f1f1f1" stroke="#2e2e2e" stroke-width="1.100" stroke-linejoin="round"/><rect x="1008" y="158.200" width="6.400" height="6.600" rx="1" fill="#f1f1f1" stroke="#2e2e2e" stroke-width="1.300"/><path d="M1011.200 156.600V153.600L1014.600 151.200L1019 155.200L1020.600 161.200H1016.400" fill="none" stroke="#2e2e2e" stroke-width="1" stroke-dasharray="1.800 1.300"/><path d="M1040.400 150V160.400L1049.400 160.400M1040.400 160.400L1035 165.600" fill="none" stroke="#2e2e2e" stroke-width="1.100"/><path d="M1040.400 148.800L1038.800 152H1042z M1050.600 160.400L1047.600 158.800V162z M1034.200 166.400L1035 163.400L1037.400 165.600z" fill="#2e2e2e"/><circle cx="1040.400" cy="160.400" r="1.400" fill="#f1f1f1" stroke="#2e2e2e" stroke-width="0.800"/><path d="M1061.2 156.6h7.6l-3.8 3.8z" fill="#2e2e2e"/>
<path d="M1083.800 154.400L1091.600 150.600L1099.600 154.400V163.200L1091.600 167.400L1083.800 163.200z" fill="#ffffff"/><path d="M1083.800 154.400L1091.600 158.200L1099.600 154.400M1091.600 158.200V167.400" fill="none" stroke="#5a5a5a" stroke-width="1"/><path d="M1110.600 154.400L1118.600 150.600L1126.600 154.400V163.200L1118.600 167.400L1110.600 163.200z" fill="none" stroke="#2e2e2e" stroke-width="1.100"/><path d="M1110.600 154.400L1118.600 158.200L1126.600 154.400M1118.600 158.200V167.400M1110.600 163.200L1118.600 159.400L1126.600 163.200M1118.600 150.600V159.400" fill="none" stroke="#2e2e2e" stroke-width="0.700"/><path d="M1138.7 156.6h7.6l-3.8 3.8z" fill="#2e2e2e"/>
<g transform="translate(1169.3 158.3)"><path d="M-7.200 0Q0 -8.200 7.200 0Q0 8.200 -7.200 0z" fill="none" stroke="#2e2e2e" stroke-width="1.800" stroke-linejoin="round"/><circle cx="0" cy="0" r="2.600" fill="#2e2e2e"/><path d="M-7.600 -6.800L7.600 7.200" stroke="#2e2e2e" stroke-width="1.500"/></g>
<path d="M1188.7 156.6h7.6l-3.8 3.8z" fill="#2e2e2e"/>

<path d="M9.600 150.600V164.200H13 M9.600 153.600H13 M9.600 158.800H13" fill="none" stroke="#fff" stroke-width="1.300"/><rect x="13" y="152.1" width="5" height="3" rx="1.400" fill="#fff"/><rect x="13" y="157.3" width="5" height="3" rx="1.400" fill="#fff"/><rect x="13" y="162.7" width="5" height="3" rx="1.400" fill="#fff"/><rect x="8.200" y="149.600" width="2.800" height="2.800" fill="#fff"/><rect x="8" y="176.200" width="10.800" height="14.400" rx="1" fill="none" stroke="#2e2e2e" stroke-width="1.200"/><path d="M9.800 179.6l1.200 1.200l1.800-2.200" fill="none" stroke="#2e2e2e" stroke-width="0.900"/><path d="M14 179.6h3.200" stroke="#2e2e2e" stroke-width="1.100"/><path d="M9.800 183.4l1.200 1.200l1.800-2.200" fill="none" stroke="#2e2e2e" stroke-width="0.900"/><path d="M14 183.4h3.200" stroke="#2e2e2e" stroke-width="1.100"/><path d="M9.800 187.2l1.200 1.200l1.800-2.200" fill="none" stroke="#2e2e2e" stroke-width="0.900"/><path d="M14 187.2h3.200" stroke="#2e2e2e" stroke-width="1.100"/><rect x="4.400" y="225" width="15.800" height="3.600" rx="1.200" fill="#2e2e2e"/><rect x="4.400" y="231" width="15.800" height="3.600" rx="1.200" fill="#2e2e2e"/><rect x="4.400" y="237" width="15.800" height="3.600" rx="1.200" fill="#2e2e2e"/><circle cx="381.2" cy="153.6" r="3.700" fill="none" stroke="#2e2e2e" stroke-width="2.200"/><path d="M385.60 153.60L387.50 153.60" stroke="#2e2e2e" stroke-width="2.300"/><path d="M384.31 156.71L385.65 158.05" stroke="#2e2e2e" stroke-width="2.300"/><path d="M381.20 158.00L381.20 159.90" stroke="#2e2e2e" stroke-width="2.300"/><path d="M378.09 156.71L376.75 158.05" stroke="#2e2e2e" stroke-width="2.300"/><path d="M376.80 153.60L374.90 153.60" stroke="#2e2e2e" stroke-width="2.300"/><path d="M378.09 150.49L376.75 149.15" stroke="#2e2e2e" stroke-width="2.300"/><path d="M381.20 149.20L381.20 147.30" stroke="#2e2e2e" stroke-width="2.300"/><path d="M384.31 150.49L385.65 149.15" stroke="#2e2e2e" stroke-width="2.300"/><path d="M34 166.800V181.400H38.600 M34 170.400H38.600" fill="none" stroke="#2e2e2e" stroke-width="1.200"/><rect x="32.600" y="165.600" width="2.800" height="2.800" fill="#f4f4f4" stroke="#2e2e2e" stroke-width="0.800"/><path d="M40.400 168.200V182" stroke="#2e2e2e" stroke-width="1.100" stroke-dasharray="1.600 1.200"/><path d="M43.400 170v3.600M46.400 170v3.600M42.600 170.8l0.800-0.800M45.600 170.8l0.800-0.800" stroke="#2e2e2e" stroke-width="0.900" fill="none"/><path d="M43.400 175.4v3.600M46.400 175.4v3.600M42.600 176.20000000000002l0.800-0.800M45.600 176.20000000000002l0.800-0.800" stroke="#2e2e2e" stroke-width="0.900" fill="none"/><path d="M60.200 167.200V181H64 M60.200 170.600H64 M60.200 175.800H64" fill="none" stroke="#fff" stroke-width="1.300"/><rect x="58.800" y="166" width="2.800" height="2.800" fill="#fff"/><rect x="64" y="169.1" width="6.400" height="3" rx="1.400" fill="#fff"/><rect x="64" y="174.3" width="6.400" height="3" rx="1.400" fill="#fff"/><rect x="64" y="179.5" width="6.400" height="3" rx="1.400" fill="#fff"/><path d="M88.600 178.600V169.600L92.600 166.600H96.400L100 170.200V178.600z" fill="#f4f4f4" stroke="#2e2e2e" stroke-width="1.100"/><path d="M86.200 180.600V172.400L89.600 169.600H93L96.400 173V180.600z" fill="#f4f4f4" stroke="#2e2e2e" stroke-width="1.100"/><circle cx="92.600" cy="175.400" r="2.300" fill="none" stroke="#2e2e2e" stroke-width="0.900"/><rect x="84.200" y="176.400" width="6" height="6" rx="1" fill="#f4f4f4" stroke="#2e2e2e" stroke-width="1"/><circle cx="87.200" cy="179.400" r="1.200" fill="none" stroke="#2e2e2e" stroke-width="0.800"/><rect x="111.200" y="167.200" width="14.200" height="14.200" fill="none" stroke="#2e2e2e" stroke-width="1.500" stroke-dasharray="1.500 1.340"/><rect x="114.400" y="170.400" width="7.800" height="7.800" fill="none" stroke="#2e2e2e" stroke-width="1" stroke-dasharray="1.200 1.000"/><path d="M136.600 171.0L142 166.79999999999998H151.600L146.400 171.2Q141.500 172.2 136.600 171.0z" fill="#2e2e2e" stroke="#f5f5f5" stroke-width="0.600"/><path d="M136.600 175.4L142 171.2H151.600L146.400 175.6Q141.500 176.6 136.600 175.4z" fill="#2e2e2e" stroke="#f5f5f5" stroke-width="0.600"/><path d="M136.600 179.8L142 175.6H151.600L146.400 180.0Q141.500 181.0 136.600 179.8z" fill="#2e2e2e" stroke="#f5f5f5" stroke-width="0.600"/><path d="M166.400 166.600V181.800" stroke="#fff" stroke-width="1.300"/><path d="M166.400 167.2h2.600" stroke="#fff" stroke-width="1.100"/><path d="M166.400 172.2h2.600" stroke="#fff" stroke-width="1.100"/><path d="M166.400 177.2h2.600" stroke="#fff" stroke-width="1.100"/><path d="M166.400 182h2.600" stroke="#fff" stroke-width="1.100"/><path d="M170.200 168.6l1.900 2.100l3.300-3.700" fill="none" stroke="#fff" stroke-width="1.300"/><rect x="178.800" y="170.2" width="3.800" height="1.700" fill="#fff"/><path d="M170.200 173.6l1.900 2.100l3.300-3.700" fill="none" stroke="#fff" stroke-width="1.300"/><rect x="178.800" y="175.2" width="3.800" height="1.700" fill="#fff"/><path d="M170.200 178.6l1.900 2.100l3.300-3.700" fill="none" stroke="#fff" stroke-width="1.300"/><rect x="178.800" y="180.2" width="3.800" height="1.700" fill="#fff"/><path d="M192.89999999999998 171.3h9.6l-4.8 4.6z" fill="#ffffff"/>
<path d="M31.600 193.600H48.200L41.800 201V208.400L38 205.600V201z" fill="#2e2e2e"/><circle cx="66.600" cy="199.400" r="3.600" fill="none" stroke="#9a9a9a" stroke-width="1.300"/><path d="M64.200 202.200L60.200 206.400" stroke="#9a9a9a" stroke-width="1.500"/><g transform="translate(40.2 255.26999999999998) scale(0.95)"><path d="M-7.200 0Q0 -8.200 7.200 0Q0 8.200 -7.200 0z" fill="#f4f4f4" stroke="#2e2e2e" stroke-width="1.900" stroke-linejoin="round"/><circle cx="0" cy="0" r="2.700" fill="#2e2e2e"/><circle cx="-0.700" cy="-0.800" r="0.700" fill="#ddd"/></g>
<g transform="translate(40.4 281.44) scale(0.98)"><path d="M-7.200 0Q0 -8.200 7.200 0Q0 8.200 -7.200 0z" fill="none" stroke="#2e2e2e" stroke-width="1.800" stroke-linejoin="round"/><circle cx="0" cy="0" r="2.600" fill="#2e2e2e"/><path d="M-7.600 -6.800L7.600 7.200" stroke="#2e2e2e" stroke-width="1.500"/></g>
<g transform="translate(40.4 307.51) scale(0.98)"><path d="M-7.200 0Q0 -8.200 7.200 0Q0 8.200 -7.200 0z" fill="none" stroke="#2e2e2e" stroke-width="1.800" stroke-linejoin="round"/><circle cx="0" cy="0" r="2.600" fill="#2e2e2e"/><path d="M-7.600 -6.800L7.600 7.200" stroke="#2e2e2e" stroke-width="1.500"/></g>
<g transform="translate(40.2 333.48) scale(0.95)"><path d="M-7.200 0Q0 -8.200 7.200 0Q0 8.200 -7.200 0z" fill="#f4f4f4" stroke="#2e2e2e" stroke-width="1.900" stroke-linejoin="round"/><circle cx="0" cy="0" r="2.700" fill="#2e2e2e"/><circle cx="-0.700" cy="-0.800" r="0.700" fill="#ddd"/></g>
<g transform="translate(40.2 359.55) scale(0.95)"><path d="M-7.200 0Q0 -8.200 7.200 0Q0 8.200 -7.200 0z" fill="#f4f4f4" stroke="#2e2e2e" stroke-width="1.900" stroke-linejoin="round"/><circle cx="0" cy="0" r="2.700" fill="#2e2e2e"/><circle cx="-0.700" cy="-0.800" r="0.700" fill="#ddd"/></g>
<g transform="translate(40.2 385.62) scale(0.95)"><path d="M-7.200 0Q0 -8.200 7.200 0Q0 8.200 -7.200 0z" fill="#f4f4f4" stroke="#2e2e2e" stroke-width="1.900" stroke-linejoin="round"/><circle cx="0" cy="0" r="2.700" fill="#2e2e2e"/><circle cx="-0.700" cy="-0.800" r="0.700" fill="#ddd"/></g>
<g transform="translate(40.2 411.69000000000005) scale(0.95)"><path d="M-7.200 0Q0 -8.200 7.200 0Q0 8.200 -7.200 0z" fill="#f4f4f4" stroke="#2e2e2e" stroke-width="1.900" stroke-linejoin="round"/><circle cx="0" cy="0" r="2.700" fill="#2e2e2e"/><circle cx="-0.700" cy="-0.800" r="0.700" fill="#ddd"/></g>
<g transform="translate(40.2 463.83000000000004) scale(0.95)"><path d="M-7.200 0Q0 -8.200 7.200 0Q0 8.200 -7.200 0z" fill="#f4f4f4" stroke="#2e2e2e" stroke-width="1.900" stroke-linejoin="round"/><circle cx="0" cy="0" r="2.700" fill="#2e2e2e"/><circle cx="-0.700" cy="-0.800" r="0.700" fill="#ddd"/></g>
<g transform="translate(40.2 489.9) scale(0.95)"><path d="M-7.200 0Q0 -8.200 7.200 0Q0 8.200 -7.200 0z" fill="#f4f4f4" stroke="#2e2e2e" stroke-width="1.900" stroke-linejoin="round"/><circle cx="0" cy="0" r="2.700" fill="#2e2e2e"/><circle cx="-0.700" cy="-0.800" r="0.700" fill="#ddd"/></g>
<g transform="translate(40.2 515.97) scale(0.95)"><path d="M-7.200 0Q0 -8.200 7.200 0Q0 8.200 -7.200 0z" fill="#f4f4f4" stroke="#2e2e2e" stroke-width="1.900" stroke-linejoin="round"/><circle cx="0" cy="0" r="2.700" fill="#2e2e2e"/><circle cx="-0.700" cy="-0.800" r="0.700" fill="#ddd"/></g>
<path d="M92.4 226.79999999999998h6l-3 4.800z" fill="#2e2e2e"/><path d="M103.19999999999999 252.86999999999998v5.600l4.800-2.800z" fill="#2e2e2e"/><path d="M103.19999999999999 278.94v5.600l4.800-2.800z" fill="#2e2e2e"/><path d="M103.19999999999999 305.01v5.600l4.800-2.800z" fill="#2e2e2e"/><path d="M102.2 331.68h6l-3 4.800z" fill="#2e2e2e"/><path d="M112.6 357.35h6l-3 4.800z" fill="#2e2e2e"/><path d="M112.6 461.63000000000005h6l-3 4.800z" fill="#2e2e2e"/><path d="M105.400 221.400H114.600L118.200 225V234.600Q118.200 236.200 116.600 236.200H105.400Q103.800 236.200 103.800 234.600V223Q103.800 221.400 105.400 221.400z" fill="#fafafa" stroke="#2e2e2e" stroke-width="1.500"/><circle cx="111" cy="229" r="4.300" fill="#2e2e2e"/><path d="M111 229L108 226A4.200 4.200 0 0 1 115.200 228z" fill="#fafafa"/><path d="M120.400 247.07V258.27H130M120.400 258.27L114 264.46999999999997" fill="none" stroke="#2e2e2e" stroke-width="1.200"/><path d="M118.600 251.26999999999998H126.600V258.27" fill="none" stroke="#2e2e2e" stroke-width="1.200"/><path d="M118.600 251.26999999999998V258.27" fill="none" stroke="#2e2e2e" stroke-width="1.200"/><path d="M119 289.34000000000003Q112.400 283.74 117.600 278.34000000000003Q121.600 274.74 123.400 279.14Q124.600 282.74 128.600 276.94" fill="none" stroke="#8e8e8e" stroke-width="1.200"/><rect x="114.200" y="300.21" width="5" height="12.400" fill="#6e6e6e"/><path d="M119.600 303.61H124V309.41H129.200V314.81H119.600z" fill="#f2f2f2" stroke="#5a5a5a" stroke-width="1.200"/><path d="M121.600 331.28V340.08Q125.400 341.88 129.400 340.08V331.28" fill="#fafafa" stroke="#2e2e2e" stroke-width="1.200"/><ellipse cx="125.500" cy="331.08" rx="3.900" ry="2" fill="#fafafa" stroke="#2e2e2e" stroke-width="1.200"/><path d="M114.600 328.88V339.28Q118 341.08 121.400 339.28V328.88" fill="#fafafa" stroke="#2e2e2e" stroke-width="1.200"/><ellipse cx="118" cy="328.68" rx="3.400" ry="1.900" fill="#fafafa" stroke="#2e2e2e" stroke-width="1.200"/><path d="M125.800 354.75V365.34999999999997Q131 368.55 136.400 365.34999999999997V354.75" fill="none" stroke="#2e2e2e" stroke-width="1.300"/><ellipse cx="131.100" cy="354.55" rx="5.300" ry="2.700" fill="none" stroke="#2e2e2e" stroke-width="1.300"/><path d="M125.800 459.03000000000003V469.63Q131 472.83000000000004 136.400 469.63V459.03000000000003" fill="none" stroke="#2e2e2e" stroke-width="1.300"/><ellipse cx="131.100" cy="458.83000000000004" rx="5.300" ry="2.700" fill="none" stroke="#2e2e2e" stroke-width="1.300"/><g transform="translate(133.6 378.02) scale(0.97)"><path d="M3.600 0.600H16V12.400L13 15.600H9V6.600H0.600V4z" fill="#2e2e2e"/><path d="M5.400 3H13.400V11.600H10.600V5.400H5.400z" fill="#d9edf2"/><rect x="0.900" y="6.300" width="8.600" height="8.800" fill="#d9edf2" stroke="#2e2e2e" stroke-width="1.600"/></g>
<g transform="translate(134 404.09000000000003)"><path d="M4.400 0.800Q0.400 1.600 0.600 6.400Q0.800 11.600 4 13.600V15.400H7V0.800z" fill="#2e2e2e"/><path d="M7.600 1.400H13.600Q15.400 6 13.600 12.600L11 14H7.600z" fill="#d9edf2" stroke="#2e2e2e" stroke-width="1.300"/><path d="M10.400 1.600V13.600 M8.400 4.600h1.600M8.400 7.600h1.600M8.400 10.600h1.600" stroke="#2e2e2e" stroke-width="1"/></g>
<g transform="translate(134 430.15999999999997) scale(0.95)"><path d="M1.800 0.600H15.800V12.800L13 15.600H0.600V1.800Q0.600 0.600 1.800 0.600z" fill="#2e2e2e"/><rect x="2.200" y="2.200" width="10.200" height="10.600" fill="#d9edf2"/><rect x="4.800" y="4.800" width="5.600" height="5.800" fill="#2e2e2e"/><rect x="6.400" y="6.400" width="2.600" height="2.800" fill="#d9edf2"/></g>
<g transform="translate(134 482.29999999999995)"><path d="M4.400 0.800Q0.400 1.600 0.600 6.400Q0.800 11.600 4 13.600V15.400H7V0.800z" fill="#2e2e2e"/><path d="M7.600 1.400H13.600Q15.400 6 13.600 12.600L11 14H7.600z" fill="#fafafa" stroke="#2e2e2e" stroke-width="1.300"/><path d="M10.400 1.600V13.600 M8.400 4.600h1.600M8.400 7.600h1.600M8.400 10.600h1.600" stroke="#2e2e2e" stroke-width="1"/></g>
<g transform="translate(133.6 508.37) scale(0.97)"><path d="M3.600 0.600H16V12.400L13 15.600H9V6.600H0.600V4z" fill="#2e2e2e"/><path d="M5.400 3H13.400V11.600H10.600V5.400H5.400z" fill="#fafafa"/><rect x="0.900" y="6.300" width="8.600" height="8.800" fill="#fafafa" stroke="#2e2e2e" stroke-width="1.600"/></g>
<g transform="translate(134 534.44) scale(0.95)"><path d="M1.800 0.600H15.800V12.800L13 15.600H0.600V1.800Q0.600 0.600 1.800 0.600z" fill="#2e2e2e"/><rect x="2.200" y="2.200" width="10.200" height="10.600" fill="#fafafa"/><rect x="4.800" y="4.800" width="5.600" height="5.800" fill="#2e2e2e"/><rect x="6.400" y="6.400" width="2.600" height="2.800" fill="#fafafa"/></g>

</svg>
<span class="t" style="left:32.35px;top:6.90px;font-size:12.2px;color:#454545;transform:scaleX(0.9610);">Файл</span>
<span class="t" style="left:73.35px;top:6.90px;font-size:12.2px;color:#454545;transform:scaleX(0.9788);">Правка</span>
<span class="t" style="left:125.35px;top:6.90px;font-size:12.2px;color:#454545;transform:scaleX(0.9478);">Выделить</span>
<span class="t" style="left:190.35px;top:6.90px;font-size:12.2px;color:#454545;transform:scaleX(0.9654);">Вид</span>
<span class="t" style="left:222.35px;top:6.90px;font-size:12.2px;color:#454545;transform:scaleX(0.9910);">Эскиз</span>
<span class="t" style="left:265.35px;top:6.90px;font-size:12.2px;color:#454545;transform:scaleX(1.0011);">Моделирование</span>
<span class="t" style="left:368.35px;top:6.90px;font-size:12.2px;color:#454545;transform:scaleX(0.9887);">Оформление</span>
<span class="t" style="left:453.85px;top:6.90px;font-size:12.2px;color:#454545;transform:scaleX(1.0020);">Диагностика</span>
<span class="t" style="left:535.35px;top:6.90px;font-size:12.2px;color:#454545;transform:scaleX(1.0005);">Управление</span>
<span class="t" style="left:614.85px;top:6.90px;font-size:12.2px;color:#454545;transform:scaleX(0.9967);">Настройка</span>
<span class="t" style="left:685.35px;top:6.90px;font-size:12.2px;color:#454545;transform:scaleX(1.0279);">Приложения</span>
<span class="t" style="left:770.35px;top:6.90px;font-size:12.2px;color:#454545;transform:scaleX(1.0343);">Окно</span>
<span class="t" style="left:811.35px;top:6.90px;font-size:12.2px;color:#454545;transform:scaleX(0.9788);">Справка</span>
<span class="t" style="left:73.35px;top:31.80px;font-size:11.4px;color:#ffffff;transform:scaleX(1.0571);">Гидроцилиндр_прот...</span>
<span class="t" style="left:26.35px;top:54.20px;font-size:11.6px;color:#ffffff;transform:scaleX(1.0215);">Твердотельное</span>
<span class="t" style="left:26.35px;top:64.70px;font-size:11.6px;color:#ffffff;transform:scaleX(1.0514);">моделирование</span>
<span class="t" style="left:26.35px;top:78.20px;font-size:11.6px;color:#3c3c3c;transform:scaleX(1.0400);">Каркас и</span>
<span class="t" style="left:26.35px;top:89.20px;font-size:11.6px;color:#3c3c3c;transform:scaleX(1.0522);">поверхности</span>
<span class="t" style="left:26.35px;top:103.20px;font-size:11.6px;color:#3c3c3c;transform:scaleX(1.0554);">Инструменты</span>
<span class="t" style="left:26.35px;top:114.20px;font-size:11.6px;color:#3c3c3c;transform:scaleX(1.0219);">эскиза</span>
<span class="t" style="left:226.35px;top:58.20px;font-size:11.6px;color:#3c3c3c;transform:scaleX(1.0501);">Автолиния</span>
<span class="t" style="left:226.35px;top:83.20px;font-size:11.6px;color:#3c3c3c;transform:scaleX(1.0734);">Окружность</span>
<span class="t" style="left:226.35px;top:108.20px;font-size:11.6px;color:#3c3c3c;transform:scaleX(1.0960);">Прямоугольник</span>
<span class="t" style="left:348.35px;top:53.20px;font-size:11.6px;color:#3c3c3c;transform:scaleX(1.0001);">Элемент</span>
<span class="t" style="left:348.35px;top:64.20px;font-size:11.6px;color:#3c3c3c;transform:scaleX(1.0104);">выдавливания</span>
<span class="t" style="left:348.35px;top:78.20px;font-size:11.6px;color:#3c3c3c;transform:scaleX(0.9752);">Вырезать</span>
<span class="t" style="left:348.35px;top:89.20px;font-size:11.6px;color:#3c3c3c;transform:scaleX(1.0193);">выдавливанием</span>
<span class="t" style="left:348.35px;top:108.20px;font-size:11.6px;color:#3c3c3c;transform:scaleX(1.0680);">Скругление</span>
<span class="t" style="left:468.35px;top:53.20px;font-size:11.6px;color:#3c3c3c;transform:scaleX(1.0378);">Придать</span>
<span class="t" style="left:468.35px;top:64.20px;font-size:11.6px;color:#3c3c3c;transform:scaleX(1.0850);">толщину</span>
<span class="t" style="left:468.35px;top:78.20px;font-size:11.6px;color:#3c3c3c;transform:scaleX(1.0175);">Отверстие</span>
<span class="t" style="left:468.35px;top:89.20px;font-size:11.6px;color:#3c3c3c;transform:scaleX(1.0756);">простое</span>
<span class="t" style="left:468.35px;top:103.20px;font-size:11.6px;color:#3c3c3c;transform:scaleX(1.0667);">Полное</span>
<span class="t" style="left:468.35px;top:114.20px;font-size:11.6px;color:#3c3c3c;transform:scaleX(1.0807);">скругление</span>
<span class="t" style="left:588.85px;top:53.20px;font-size:11.6px;color:#3c3c3c;transform:scaleX(1.0369);">Ребро</span>
<span class="t" style="left:588.85px;top:64.20px;font-size:11.6px;color:#3c3c3c;transform:scaleX(1.0596);">жесткости</span>
<span class="t" style="left:588.85px;top:83.20px;font-size:11.6px;color:#3c3c3c;transform:scaleX(1.0332);">Сечение</span>
<span class="t" style="left:588.85px;top:108.20px;font-size:11.6px;color:#3c3c3c;transform:scaleX(1.0787);">Уклон</span>
<span class="t" style="left:708.85px;top:53.20px;font-size:11.6px;color:#3c3c3c;transform:scaleX(1.0302);">Добавить</span>
<span class="t" style="left:708.85px;top:64.20px;font-size:11.6px;color:#3c3c3c;transform:scaleX(0.9931);">деталь-заготов…</span>
<span class="t" style="left:708.85px;top:83.20px;font-size:11.6px;color:#3c3c3c;transform:scaleX(1.0765);">Оболочка</span>
<span class="t" style="left:708.85px;top:103.20px;font-size:11.6px;color:#3c3c3c;transform:scaleX(1.0053);">Булева</span>
<span class="t" style="left:708.85px;top:114.20px;font-size:11.6px;color:#3c3c3c;transform:scaleX(1.0453);">операция</span>
<span class="t" style="left:830.35px;top:58.20px;font-size:11.6px;color:#3c3c3c;transform:scaleX(1.0361);">Удалить грани</span>
<span class="t" style="left:830.35px;top:78.20px;font-size:11.6px;color:#3c3c3c;transform:scaleX(1.0179);">Переместить</span>
<span class="t" style="left:830.35px;top:89.20px;font-size:11.6px;color:#3c3c3c;transform:scaleX(1.1094);">грани</span>
<span class="t" style="left:830.35px;top:108.20px;font-size:11.6px;color:#3c3c3c;transform:scaleX(1.0348);">Заменить грани</span>
<span class="t" style="left:951.85px;top:53.20px;font-size:11.6px;color:#3c3c3c;transform:scaleX(1.0793);">Точка по</span>
<span class="t" style="left:951.85px;top:64.20px;font-size:11.6px;color:#3c3c3c;transform:scaleX(1.0585);">координатам</span>
<span class="t" style="left:951.85px;top:83.20px;font-size:11.6px;color:#3c3c3c;transform:scaleX(1.0707);">Контур</span>
<span class="t" style="left:951.85px;top:103.20px;font-size:11.6px;color:#3c3c3c;transform:scaleX(1.0421);">Спираль</span>
<span class="t" style="left:951.85px;top:114.20px;font-size:11.6px;color:#3c3c3c;transform:scaleX(1.0274);">цилиндрическ…</span>
<span class="t" style="left:1073.35px;top:58.20px;font-size:11.6px;color:#3c3c3c;transform:scaleX(1.0433);">Массив по сетке</span>
<span class="t" style="left:1073.35px;top:78.20px;font-size:11.6px;color:#3c3c3c;transform:scaleX(1.0458);">Копировать</span>
<span class="t" style="left:1073.35px;top:89.20px;font-size:11.6px;color:#3c3c3c;transform:scaleX(1.0453);">объекты</span>
<span class="t" style="left:1073.35px;top:103.20px;font-size:11.6px;color:#3c3c3c;transform:scaleX(1.0504);">Коллекция</span>
<span class="t" style="left:1073.35px;top:114.20px;font-size:11.6px;color:#3c3c3c;transform:scaleX(1.0661);">геометрии</span>
<span class="t" style="left:131.35px;top:132.60px;font-size:9.8px;color:#4a4a4a;transform:scaleX(0.9826);">Системная</span>
<span class="t" style="left:235.35px;top:132.60px;font-size:9.8px;color:#4a4a4a;transform:scaleX(1.0419);">Эскиз</span>
<span class="t" style="left:517.35px;top:132.60px;font-size:9.8px;color:#4a4a4a;transform:scaleX(0.9701);">Элементы тела</span>
<span class="t" style="left:809.35px;top:132.60px;font-size:9.8px;color:#4a4a4a;transform:scaleX(1.0000);">Прямое моделир…</span>
<span class="t" style="left:931.85px;top:132.60px;font-size:9.8px;color:#4a4a4a;transform:scaleX(0.9927);">Элементы каркаса</span>
<span class="t" style="left:1052.35px;top:132.60px;font-size:9.8px;color:#4a4a4a;transform:scaleX(1.0486);">Массив, копирование</span>
<span class="t" style="left:1171.85px;top:132.60px;font-size:9.8px;color:#4a4a4a;transform:scaleX(1.0691);">Вспомогательные</span>
<span class="t" style="left:29.85px;top:148.10px;font-size:11.8px;color:#383838;transform:scaleX(0.9753);">Дерево: структура</span>
<span class="t" style="left:76.85px;top:195.05px;font-size:12.5px;color:#b2b2b2;transform:scaleX(1.0280);-webkit-text-stroke:0.15px #b2b2b2">Поиск (Ctrl+/)</span>
<span class="t" style="left:121.35px;top:224.15px;font-size:12.5px;color:#333333;transform:scaleX(0.9636);">Гидроцилиндр_прото (Тел-3)</span>
<span class="t" style="left:131.35px;top:250.25px;font-size:12.5px;color:#333333;transform:scaleX(0.9670);">Системы координат</span>
<span class="t" style="left:131.35px;top:276.25px;font-size:12.5px;color:#8a8a8a;transform:scaleX(0.9814);">Кривые и точки</span>
<span class="t" style="left:131.35px;top:302.35px;font-size:12.5px;color:#8a8a8a;transform:scaleX(0.9503);">Эскизы</span>
<span class="t" style="left:131.35px;top:328.45px;font-size:12.5px;color:#333333;transform:scaleX(0.9127);">Тела</span>
<span class="t" style="left:141.85px;top:354.55px;font-size:12.5px;color:#333333;transform:scaleX(0.9091);">Тело 1</span>
<span class="t" style="left:151.35px;top:380.55px;font-size:12.5px;color:#333333;transform:scaleX(0.9251);">Элемент выдавливания:1</span>
<span class="t" style="left:151.35px;top:406.65px;font-size:12.5px;color:#333333;transform:scaleX(0.9360);">Элемент вращения:1</span>
<span class="t" style="left:151.35px;top:432.75px;font-size:12.5px;color:#333333;transform:scaleX(0.9318);">Элемент выдавливания:2</span>
<span class="t" style="left:141.85px;top:458.75px;font-size:12.5px;color:#333333;transform:scaleX(0.9091);">Тело 2</span>
<span class="t" style="left:151.35px;top:484.85px;font-size:12.5px;color:#333333;transform:scaleX(0.9441);">Элемент вращения:2</span>
<span class="t" style="left:151.35px;top:510.95px;font-size:12.5px;color:#333333;transform:scaleX(0.9318);">Элемент выдавливания:3</span>
<span class="t" style="left:151.35px;top:536.95px;font-size:12.5px;color:#333333;transform:scaleX(0.9351);">Элемент выдавливания:4</span>
<span class="t" style="left:7.55px;top:197.55px;font-size:17.5px;color:#333;transform:scaleX(1.4974);font-family:'Liberation Serif',serif;font-style:italic;-webkit-text-stroke:0">f</span>
<span class="t" style="left:11.75px;top:204.15px;font-size:13.5px;color:#333;transform:scaleX(1.3185);">x</span>
<span class="t" style="left:60.00px;top:274.54px;font-size:15px;color:#3a3a3a;transform:scaleX(1.0000);font-family:'DejaVu Sans',sans-serif;-webkit-text-stroke:0">∈</span>
<span class="t" style="left:60.00px;top:300.61px;font-size:15px;color:#3a3a3a;transform:scaleX(1.0000);font-family:'DejaVu Sans',sans-serif;-webkit-text-stroke:0">∈</span>
<span class="t" style="left:60.00px;top:326.68px;font-size:15px;color:#3a3a3a;transform:scaleX(1.0000);font-family:'DejaVu Sans',sans-serif;-webkit-text-stroke:0">∈</span>
<span class="t" style="left:60.00px;top:352.75px;font-size:15px;color:#3a3a3a;transform:scaleX(1.0000);font-family:'DejaVu Sans',sans-serif;-webkit-text-stroke:0">∈</span>
<span class="t" style="left:60.00px;top:378.82px;font-size:15px;color:#3a3a3a;transform:scaleX(1.0000);font-family:'DejaVu Sans',sans-serif;-webkit-text-stroke:0">∈</span>
<span class="t" style="left:60.00px;top:404.89px;font-size:15px;color:#3a3a3a;transform:scaleX(1.0000);font-family:'DejaVu Sans',sans-serif;-webkit-text-stroke:0">∈</span>
<span class="t" style="left:60.00px;top:430.96px;font-size:15px;color:#3a3a3a;transform:scaleX(1.0000);font-family:'DejaVu Sans',sans-serif;-webkit-text-stroke:0">∈</span>
<span class="t" style="left:60.00px;top:457.03px;font-size:15px;color:#3a3a3a;transform:scaleX(1.0000);font-family:'DejaVu Sans',sans-serif;-webkit-text-stroke:0">∈</span>
<span class="t" style="left:60.00px;top:483.10px;font-size:15px;color:#3a3a3a;transform:scaleX(1.0000);font-family:'DejaVu Sans',sans-serif;-webkit-text-stroke:0">∈</span>
<span class="t" style="left:60.00px;top:509.17px;font-size:15px;color:#3a3a3a;transform:scaleX(1.0000);font-family:'DejaVu Sans',sans-serif;-webkit-text-stroke:0">∈</span>
<span class="t" style="left:60.00px;top:535.24px;font-size:15px;color:#3a3a3a;transform:scaleX(1.0000);font-family:'DejaVu Sans',sans-serif;-webkit-text-stroke:0">∈</span>
<span class="t" style="left:199.60px;top:29.40px;font-size:16px;color:#ffffff;transform:scaleX(1.0000);font-family:'DejaVu Sans',sans-serif;-webkit-text-stroke:0">×</span>
<div class="b" style="left:97.6px;top:339px;width:235.4px;height:114.4px;border:4.9px solid #e2001a;box-sizing:border-box"></div>
<div class="b" style="left:97.6px;top:448.9px;width:235.4px;height:105.6px;border:4.9px solid #e2001a;box-sizing:border-box"></div>
</body></html>
